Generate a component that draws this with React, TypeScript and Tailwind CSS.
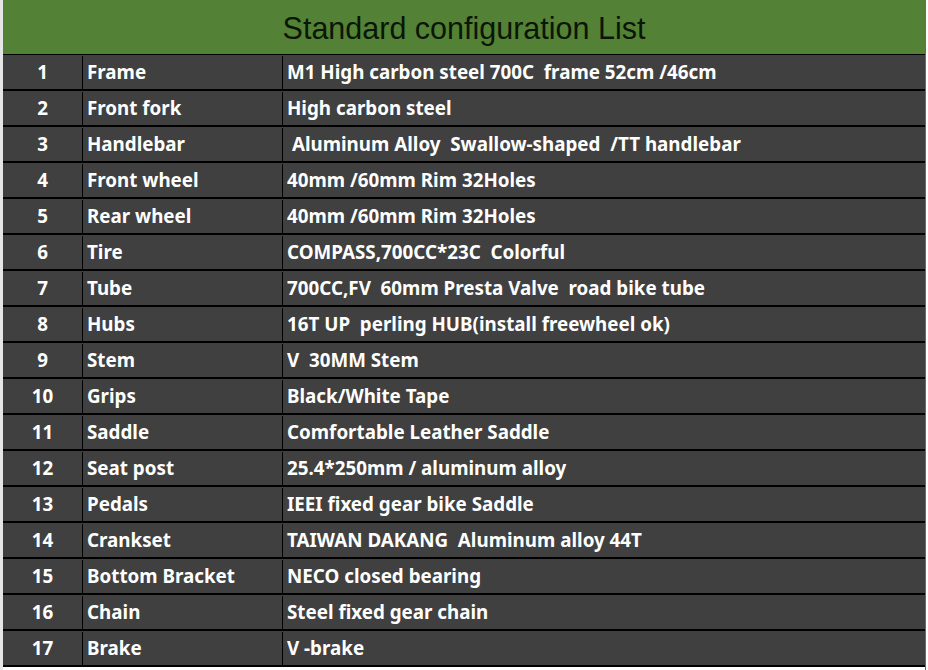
const rows: [string, string][] = [
  ['Frame', 'M1 High carbon steel 700C  frame 52cm /46cm'],
  ['Front fork', 'High carbon steel'],
  ['Handlebar', ' Aluminum Alloy  Swallow-shaped  /TT handlebar'],
  ['Front wheel', '40mm /60mm Rim 32Holes'],
  ['Rear wheel', '40mm /60mm Rim 32Holes'],
  ['Tire', 'COMPASS,700CC*23C  Colorful'],
  ['Tube', '700CC,FV  60mm Presta Valve  road bike tube'],
  ['Hubs', '16T UP  perling HUB(install freewheel ok)'],
  ['Stem', 'V  30MM Stem'],
  ['Grips', 'Black/White Tape'],
  ['Saddle', 'Comfortable Leather Saddle'],
  ['Seat post', '25.4*250mm / aluminum alloy'],
  ['Pedals', 'IEEI fixed gear bike Saddle'],
  ['Crankset', 'TAIWAN DAKANG  Aluminum alloy 44T'],
  ['Bottom Bracket', 'NECO closed bearing'],
  ['Chain', 'Steel fixed gear chain'],
  ['Brake', 'V -brake'],
];

export default function App() {
  return (
    <div className="w-[928px] h-[670px] bg-white flex">
      <div className="w-[3px] bg-[#e6e6e6]" />
      <div className="w-[923px] flex flex-col border-r border-[#6a6a6a]">
        {/* Title */}
        <div className="h-[55px] bg-[#538135] border-b border-black flex items-center justify-center">
          <h1 className="text-[30.5px] text-[#0b1607] font-['Liberation_Sans',Arial,sans-serif] leading-none mt-[2px]">
            Standard configuration List
          </h1>
        </div>

        {/* Rows */}
        {rows.map(([name, spec], i) => (
          <div
            key={i}
            className="h-[36px] bg-[#404040] border-b-[2px] border-black grid grid-cols-[80px_200px_1fr] text-white font-bold text-[18.8px] font-['Noto_Sans',sans-serif] leading-none pt-[1px]"
          >
            <div className="border-r border-black flex items-center justify-center">{i + 1}</div>
            <div className="border-r border-black flex items-center pl-[4px] whitespace-pre">{name}</div>
            <div className="flex items-center pl-[4px] whitespace-pre">{spec}</div>
          </div>
        ))}
      </div>
    </div>
  );
}
